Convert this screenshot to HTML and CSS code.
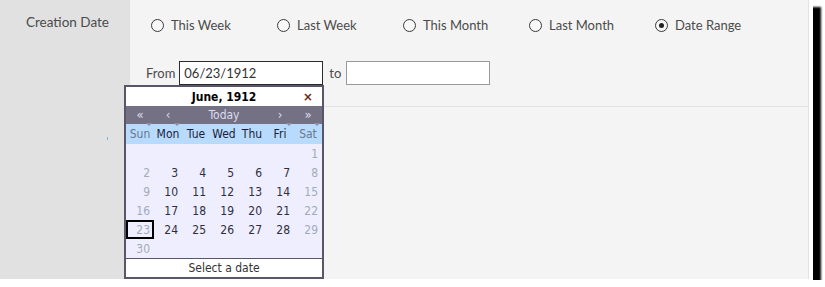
FILE: index.html
```html
<!DOCTYPE html>
<html>
<head>
<meta charset="utf-8">
<link rel="stylesheet" href="styles.css">
</head>
<body>
<div class="shot">
  <div class="form">
    <div class="label label-first">Creation Date</div>
    <div class="field field-first">
      <div class="radios">
        <label class="radio"><span class="dot"></span>This Week</label>
        <label class="radio"><span class="dot"></span>Last Week</label>
        <label class="radio"><span class="dot"></span>This Month</label>
        <label class="radio"><span class="dot"></span>Last Month</label>
        <label class="radio"><span class="dot on"></span>Date Range</label>
      </div>
      <div class="range">
        <span class="from">From</span>
        <span class="box box-active">06/23/1912</span>
        <span class="to">to</span>
        <span class="box"></span>
      </div>
    </div>
    <div class="label"><span class="speck"></span></div>
    <div class="field field-rest"></div>
  </div>

  <div class="calendar">
    <div class="cal-title">
      <span class="title-text">June, 1912</span>
      <span class="close">×</span>
    </div>
    <div class="cal-nav">
      <span class="nav-btn">«</span>
      <span class="nav-btn">‹</span>
      <span class="nav-today">Today</span>
      <span class="nav-btn">›</span>
      <span class="nav-btn">»</span>
    </div>
    <div class="cal-days">
      <span class="wkend">Sun</span><span>Mon</span><span>Tue</span><span>Wed</span><span>Thu</span><span>Fri</span><span class="wkend">Sat</span>
    </div>
    <div class="cal-body">
      <span></span><span></span><span></span><span></span><span></span><span></span><span class="wkend">1</span>
      <span class="wkend">2</span><span>3</span><span>4</span><span>5</span><span>6</span><span>7</span><span class="wkend">8</span>
      <span class="wkend">9</span><span>10</span><span>11</span><span>12</span><span>13</span><span>14</span><span class="wkend">15</span>
      <span class="wkend">16</span><span>17</span><span>18</span><span>19</span><span>20</span><span>21</span><span class="wkend">22</span>
      <span class="wkend selected">23</span><span>24</span><span>25</span><span>26</span><span>27</span><span>28</span><span class="wkend">29</span>
      <span class="wkend">30</span><span></span><span></span><span></span><span></span><span></span><span></span>
    </div>
    <div class="cal-foot">Select a date</div>
  </div>
</div>
</body>
</html>
```

FILE: styles.css
```css
html, body {
  margin: 0;
  padding: 0;
  background: #ffffff;
}

.shot {
  position: relative;
  width: 813px;
  height: 280px;
  box-sizing: border-box;
  padding: 0 4px 1px 0;
  background: #ffffff;
  box-shadow: 8px 7px 2px #000000;
  font-family: Lato, "Liberation Sans", sans-serif;
  color: #4b4b4b;
}

.form {
  display: grid;
  grid-template-columns: 130px 1fr;
  grid-template-rows: 107px 1fr;
  height: 100%;
  border-right: 1px solid #e2e2e2;
}

.label {
  background: #e1e1e1;
  position: relative;
}

.label-first {
  padding: 14px 0 0 26px;
  font-size: 13.5px;
}

.speck {
  position: absolute;
  left: 107px;
  top: 30px;
  width: 1px;
  height: 3px;
  background: #7fb5e0;
}

.field {
  background: #f4f4f4;
}

.field-first {
  border-bottom: 1px solid #e2e2e2;
  box-sizing: border-box;
}

.radios {
  display: flex;
  padding: 16px 0 0 21px;
  height: 18px;
}

.radio {
  display: flex;
  align-items: center;
  width: 126px;
  font-size: 13px;
  color: #4b4b4b;
}

.dot {
  width: 11px;
  height: 11px;
  border: 1px solid #3a3a3a;
  border-radius: 50%;
  margin-right: 7px;
  position: relative;
  background: #f8f8f8;
}

.dot.on::after {
  content: "";
  position: absolute;
  left: 3px;
  top: 3px;
  width: 5px;
  height: 5px;
  border-radius: 50%;
  background: #222;
}

.range {
  display: flex;
  align-items: center;
  padding: 27px 0 0 16px;
  font-size: 13px;
}

.from {
  margin-right: 4px;
}

.to {
  margin: 0 5px 0 6px;
}

.box {
  width: 144px;
  height: 24px;
  box-sizing: border-box;
  border: 1px solid #9a9a9a;
  background: #ffffff;
  padding: 3px 0 0 4px;
  font-size: 13px;
  color: #333;
}

.box-active {
  border-color: #2b2b2b;
}

/* Calendar popup overlay */
.calendar {
  position: absolute;
  left: 124px;
  top: 85px;
  width: 196px;
  border: 2px solid #585668;
  font-family: Tahoma, "DejaVu Sans Condensed", "Liberation Sans", sans-serif;
  font-size: 11px;
}

.cal-title {
  display: grid;
  grid-template-columns: repeat(7, 28px);
  height: 19px;
  align-items: center;
  background: #ffffff;
  color: #000;
}

.title-text {
  grid-column: 2 / 7;
  text-align: center;
  font-weight: bold;
  font-size: 12px;
}

.close {
  grid-column: 7;
  text-align: center;
  color: #6a2a10;
  font-size: 13px;
  font-weight: bold;
}

.cal-nav {
  display: grid;
  grid-template-columns: repeat(7, 28px);
  height: 18px;
  align-items: center;
  background: #737183;
  color: #dcdcf0;
}

.nav-btn {
  position: relative;
  text-align: center;
  font-size: 13px;
  line-height: 16px;
}

.nav-btn::after {
  content: "";
  position: absolute;
  right: 2px;
  bottom: -3px;
  border-left: 3px solid transparent;
  border-right: 3px solid transparent;
  border-top: 3px solid #8f8da2;
}

.nav-today {
  grid-column: 3 / 6;
  text-align: center;
  font-size: 12px;
}

.cal-days {
  display: grid;
  grid-template-columns: repeat(7, 28px);
  height: 20px;
  align-items: center;
  background: #b8dbfd;
  color: #1c1c3c;
  text-align: center;
  font-size: 12px;
}

.cal-days .wkend {
  color: #687890;
}

.cal-body {
  display: grid;
  grid-template-columns: repeat(7, 28px);
  grid-auto-rows: 19px;
  background: #eeeeff;
  color: #2e2e3e;
  font-size: 12px;
}

.cal-body span {
  display: flex;
  align-items: center;
  justify-content: flex-end;
  padding-right: 4px;
  box-sizing: border-box;
}

.cal-body .wkend {
  color: #a2abbc;
}

.cal-body .selected {
  border: 2px solid #000;
  padding-right: 2px;
}

.cal-foot {
  height: 18px;
  border-top: 1px solid #585668;
  background: #ffffff;
  text-align: center;
  line-height: 18px;
  color: #333;
  font-size: 12px;
}
```
